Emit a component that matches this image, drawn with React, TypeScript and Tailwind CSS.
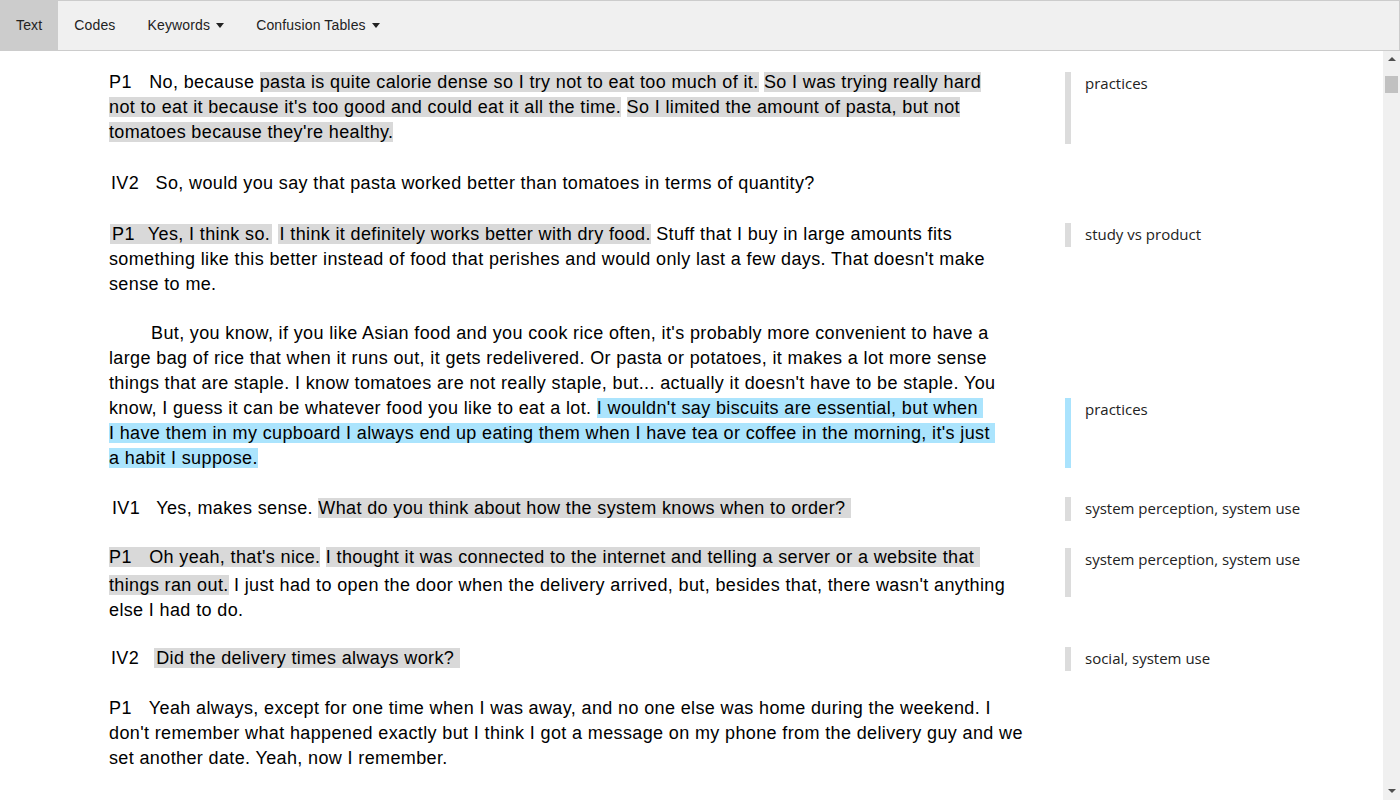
import type { ReactNode } from 'react';

/**
 * Coded interview transcript viewer
 */

const tabs = [
  { label: 'Text', active: true, caret: false },
  { label: 'Codes', active: false, caret: false },
  { label: 'Keywords', active: false, caret: true },
  { label: 'Confusion Tables', active: false, caret: true },
];

function Caret() {
  return (
    <span className="ml-[6px] inline-block h-0 w-0 border-x-[4px] border-t-[5px] border-x-transparent border-t-[#222] align-middle" />
  );
}

function Nav() {
  return (
    <div className="flex h-[51px] border-y border-r border-[#cccccc] bg-[#f0f0f0] font-['Liberation_Sans',Arial,sans-serif] text-[14px] tracking-[0.15px] text-[#222]">
      {tabs.map(t => (
        <div
          key={t.label}
          className={
            t.active
              ? 'flex items-center bg-[#cccccc] px-4'
              : 'flex items-center px-4'
          }
        >
          {t.label}
          {t.caret && <Caret />}
        </div>
      ))}
    </div>
  );
}

// gray code highlight
function H({ children }: { children: ReactNode }) {
  return <span className="bg-[#d9d9d9]">{children}</span>;
}

// blue (selected) code highlight
function B({ children }: { children: ReactNode }) {
  return <span className="bg-[#abe4fd]">{children}</span>;
}

type Note = {
  text: string;
  offset: number; // px from top of paragraph
  height: number;
  blue?: boolean;
};

function Row({
  children,
  note,
  mt,
}: {
  children: ReactNode;
  note?: Note;
  mt: string;
}) {
  return (
    <div className={`flex ${mt}`}>
      <div className="ml-[109px] w-[930px] shrink-0 font-['Liberation_Sans',Arial,sans-serif] text-[18px] leading-[25px] tracking-[0.37px] text-black">
        {children}
      </div>
      <div className="ml-[26px] flex-1">
        {note && (
          <div className="flex" style={{ marginTop: note.offset }}>
            <div
              className={note.blue ? 'w-[6px] shrink-0 bg-[#aae3fd]' : 'w-[6px] shrink-0 bg-[#dcdcdc]'}
              style={{ height: note.height }}
            />
            <div className="ml-[14px] font-['Open_Sans','Noto_Sans',sans-serif] text-[15px] leading-[22px] text-[#222]">
              {note.text}
            </div>
          </div>
        )}
      </div>
    </div>
  );
}

function Scrollbar() {
  return (
    <div className="flex w-[17px] shrink-0 flex-col items-center bg-[#f0f0f0]">
      <span className="mt-[6px] inline-block h-0 w-0 border-x-[4px] border-b-[4px] border-x-transparent border-b-[#505050]" />
      <div className="mt-[15px] h-[17px] w-[13px] bg-[#c1c1c1]" />
      <div className="flex-1" />
      <span className="mb-[7px] inline-block h-0 w-0 border-x-[4px] border-t-[4px] border-x-transparent border-t-[#505050]" />
    </div>
  );
}

function Transcript() {
  return (
    <div className="flex-1 overflow-hidden pt-[19px]">
      <Row mt="mt-0" note={{ text: 'practices', offset: 2, height: 72 }}>
        P1<span className="mr-[12px]" /> No, because{' '}
        <H>pasta is quite calorie dense so I try not to eat too much of it.</H>{' '}
        <H>
          So I was trying really hard
          <br />
          not to eat it because it's too good and could eat it all the time.
        </H>{' '}
        <H>
          So I limited the amount of pasta, but not
          <br />
          tomatoes because they're healthy.
        </H>
      </Row>

      <Row mt="mt-[26px]">
        <span className="ml-[2px]">IV2</span>
        <span className="mr-[11px]" /> So, would you say that pasta worked better than tomatoes in terms of quantity?
      </Row>

      <Row mt="mt-[26px]" note={{ text: 'study vs product', offset: 1, height: 24 }}>
        <span className="ml-[1px]" />
        <H>
          <span className="px-[2px]">
            P1<span className="mr-[8px]" /> Yes, I think so.
          </span>
        </H>{' '}
        <H>
          <span className="pl-[2px]">I think it definitely works better with dry food.</span>
        </H>{' '}
        Stuff that I buy in large amounts fits
        <br />
        something like this better instead of food that perishes and would only last a few days. That doesn't make
        <br />
        sense to me.
      </Row>

      <Row mt="mt-[24px]" note={{ text: 'practices', offset: 77, height: 70, blue: true }}>
        <span className="inline-block w-[42px]" />
        But, you know, if you like Asian food and you cook rice often, it's probably more convenient to have a
        <br />
        large bag of rice that when it runs out, it gets redelivered. Or pasta or potatoes, it makes a lot more sense
        <br />
        things that are staple. I know tomatoes are not really staple, but... actually it doesn't have to be staple. You
        <br />
        know, I guess it can be whatever food you like to eat a lot.{' '}
        <B>
          I wouldn't say biscuits are essential, but when&nbsp;
          <br />
          I have them in my cupboard I always end up eating them when I have tea or coffee in the morning, it's just&nbsp;
          <br />
          a habit I suppose.
        </B>
      </Row>

      <Row mt="mt-[25px]" note={{ text: 'system perception, system use', offset: 1, height: 24 }}>
        <span className="ml-[3px]">IV1</span>
        <span className="mr-[11px]" /> Yes, makes sense.{' '}
        <H>What do you think about how the system knows when to order?&nbsp;</H>
      </Row>

      <Row mt="mt-[24px]" note={{ text: 'system perception, system use', offset: 3, height: 49 }}>
        <H>
          P1<span className="mr-[12px]" /> Oh yeah, that's nice.
        </H>{' '}
        <H>
          I thought it was connected to the internet and telling a server or a website that&nbsp;
          <br />
          <span className="inline-block pt-[3px]">things ran out.</span>
        </H>{' '}
        I just had to open the door when the delivery arrived, but, besides that, there wasn't anything
        <br />
        else I had to do.
      </Row>

      <Row mt="mt-[23px]" note={{ text: 'social, system use', offset: 1, height: 24 }}>
        <span className="ml-[2px]">IV2</span>
        <span className="mr-[15px]" />
        <H>
          <span className="pl-[2px]">Did the delivery times always work?&nbsp;</span>
        </H>
      </Row>

      <Row mt="mt-[25px]">
        P1<span className="mr-[12px]" /> Yeah always, except for one time when I was away, and no one else was home during the weekend. I
        <br />
        don't remember what happened exactly but I think I got a message on my phone from the delivery guy and we
        <br />
        set another date. Yeah, now I remember.
      </Row>
    </div>
  );
}

export default function App() {
  return (
    <div className="flex h-[800px] flex-col overflow-hidden bg-white">
      <Nav />
      <div className="flex min-h-0 flex-1">
        <Transcript />
        <Scrollbar />
      </div>
    </div>
  );
}
